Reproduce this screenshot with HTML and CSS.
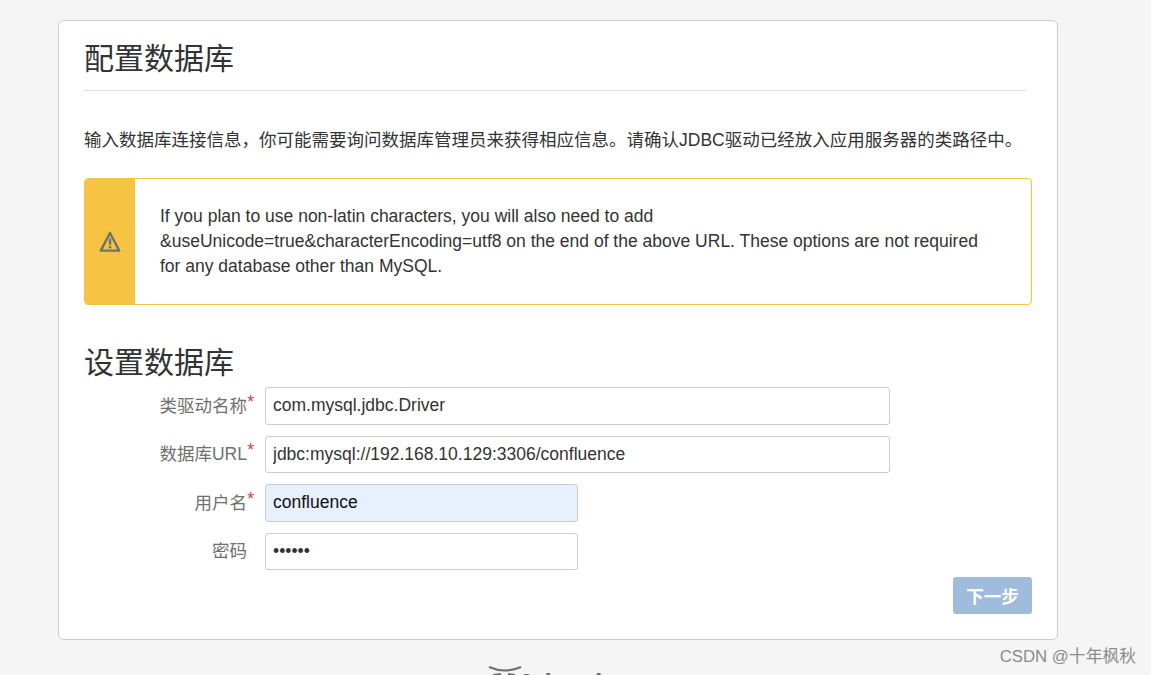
FILE: index.html
```html
<!DOCTYPE html>
<html lang="en">
<head>
    <meta charset="UTF-8">
    <title>配置数据库</title>
    <link rel="stylesheet" href="styles.css">
</head>
<body>
    <div class="card">
        <h1 class="page-title">配置数据库</h1>
        <p class="intro">输入数据库连接信息，你可能需要询问数据库管理员来获得相应信息。请确认JDBC驱动已经放入应用服务器的类路径中。</p>

        <!-- Warning box -->
        <div class="warning">
            <div class="warning-side">
                <svg class="warning-icon" width="22" height="22" viewBox="0 0 22 22">
                    <path d="M11 2 L20.2 19.6 H1.8 Z" fill="none" stroke="#707070" stroke-width="2.4" stroke-linejoin="round"/>
                    <rect x="9.8" y="7.6" width="2.4" height="6.2" fill="#707070"/>
                    <rect x="9.8" y="15" width="2.4" height="2.4" fill="#707070"/>
                </svg>
            </div>
            <div class="warning-text">If you plan to use non-latin characters, you will also need to add &amp;useUnicode=true&amp;characterEncoding=utf8 on the end of the above URL. These options are not required for any database other than MySQL.</div>
        </div>

        <h2 class="section-title">设置数据库</h2>
        <form class="db-form">
            <div class="form-row">
                <label class="form-label" for="driver">类驱动名称<span class="required">*</span></label>
                <input class="field field-long" type="text" id="driver" value="com.mysql.jdbc.Driver">
            </div>
            <div class="form-row">
                <label class="form-label" for="url">数据库URL<span class="required">*</span></label>
                <input class="field field-long" type="text" id="url" value="jdbc:mysql://192.168.10.129:3306/confluence">
            </div>
            <div class="form-row">
                <label class="form-label" for="user">用户名<span class="required">*</span></label>
                <input class="field field-short field-filled" type="text" id="user" value="confluence">
            </div>
            <div class="form-row">
                <label class="form-label" for="pass">密码</label>
                <input class="field field-short" type="password" id="pass" value="123456">
            </div>
            <div class="form-actions">
                <button class="next-btn" type="button">下一步</button>
            </div>
        </form>
    </div>

    <!-- Logo is cut off by the bottom of the window -->
    <div class="footer-logo">
        <svg class="logo-mark" width="34" height="10" viewBox="0 0 34 10">
            <path d="M1 1 Q17 8 33 1" fill="none" stroke="#707070" stroke-width="2.2"/>
            <path d="M5 9 L13 8 M20 8 L27 9" fill="none" stroke="#707070" stroke-width="2"/>
        </svg>
        <span class="logo-name">Atlassian</span>
    </div>

    <div class="watermark">CSDN @十年枫秋</div>
</body>
</html>
```

FILE: styles.css
```css
html, body {
    height: 100%;
    overflow: hidden;
}

body {
    margin: 0;
    background-color: #f5f5f5;
    color: #333;
    font-family: "Liberation Sans", "Noto Sans CJK SC", sans-serif;
    font-size: 17.5px;
}

.card {
    box-sizing: border-box;
    width: 1000px;
    height: 620px;
    margin: 20px 0 0 58px;
    padding: 0 25px;
    background-color: white;
    border: 1px solid #ccc;
    border-radius: 6px;
}

.page-title {
    width: 942px;
    height: 69px;
    margin: 0;
    border-bottom: 1px solid #ddd;
    font-size: 30px;
    font-weight: 400;
    line-height: 76px;
}

.intro {
    margin: 37px 0 0;
    font-size: 17.5px;
    line-height: 24px;
}

/* Warning box */
.warning {
    display: flex;
    box-sizing: border-box;
    width: 948px;
    height: 127px;
    margin-top: 26px;
    background-color: white;
    border: 1px solid #f6c342;
    border-radius: 4px;
    overflow: hidden;
}

.warning-side {
    display: flex;
    flex: none;
    justify-content: center;
    align-items: center;
    width: 50px;
    background-color: #f6c342;
}

.warning-text {
    align-self: center;
    width: 830px;
    padding-left: 25px;
    font-size: 17.5px;
    line-height: 25px;
}

.section-title {
    margin: 38px 0 0;
    font-size: 30px;
    font-weight: 400;
    line-height: 40px;
}

/* Form rows */
.db-form {
    margin-top: 4px;
}

.form-row {
    display: flex;
    align-items: center;
    height: 37.5px;
    margin-bottom: 11px;
}

.form-label {
    box-sizing: border-box;
    width: 181px;
    padding-right: 18px;
    color: #707070;
    font-size: 17.5px;
    line-height: 24px;
    text-align: right;
    position: relative;
}

.required {
    position: absolute;
    top: -4px;
    right: 11px;
    color: #d04437;
    font-size: 17.5px;
}

.field {
    box-sizing: border-box;
    height: 37.5px;
    padding: 0 7px;
    background-color: white;
    border: 1px solid #ccc;
    border-radius: 3px;
    color: #333;
    font-family: "Liberation Sans", sans-serif;
    font-size: 17.5px;
}

.field-long {
    width: 625px;
}

.field-short {
    width: 313px;
}

.field-filled {
    background-color: #e8f0fe;
    color: #111;
}

.form-actions {
    display: flex;
    justify-content: flex-end;
    margin-top: -4px;
}

.next-btn {
    width: 79px;
    height: 37px;
    padding: 0;
    background-color: #9fbcdc;
    border: none;
    border-radius: 3px;
    color: white;
    font-family: "Liberation Sans", "Noto Sans CJK SC", sans-serif;
    font-size: 17.5px;
    font-weight: bold;
}

.footer-logo {
    display: flex;
    align-items: flex-start;
    margin-top: 26px;
    padding-left: 488px;
}

.logo-name {
    margin: 4px 0 0 -5px;
    color: #707070;
    font-size: 26px;
    font-weight: bold;
    line-height: 26px;
}

.watermark {
    position: absolute;
    right: 15px;
    top: 647px;
    color: #8c8c8c;
    font-size: 16.8px;
    line-height: 20px;
}
```
